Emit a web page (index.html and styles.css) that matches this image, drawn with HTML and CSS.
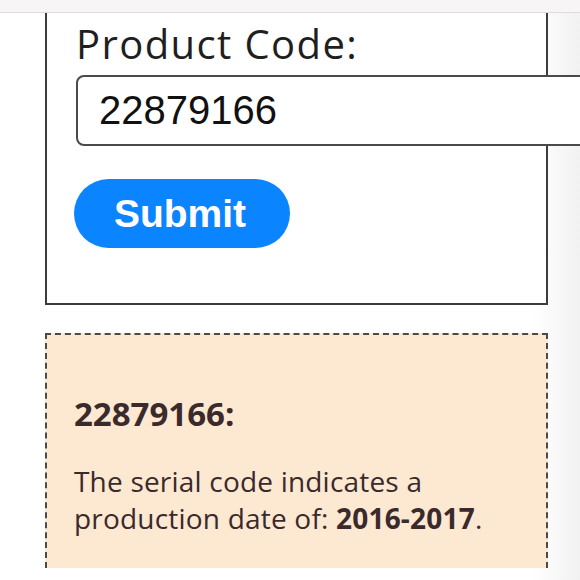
FILE: index.html
```html
<!DOCTYPE html>
<html lang="en">
<head>
<meta charset="utf-8">
<title>Product Code</title>
<link rel="stylesheet" href="styles.css">
</head>
<body>
<div class="topbar"></div>
<main class="page">
  <form class="form-card">
    <label class="label" for="code">Product Code:</label>
    <input class="code-input" id="code" type="text" value="22879166">
    <button class="submit" type="button">Submit</button>
  </form>
  <section class="result">
    <h2 class="result-title">22879166:</h2>
    <p class="result-text">The serial code indicates a production date of: <strong>2016-2017</strong>.</p>
  </section>
</main>
</body>
</html>
```
FILE: styles.css
```css
html, body {
  margin: 0;
  padding: 0;
  height: 580px;
  overflow: hidden;
  background: linear-gradient(90deg, #ffffff 0%, #ffffff 92%, #f1f1f1 100%);
}
body {
  font-family: "Open Sans", "Liberation Sans", sans-serif;
  color: #222;
}
.topbar {
  height: 12px;
  background: #f7f5f6;
  border-bottom: 1px solid #dedcdd;
}
.page {
  padding-left: 45px;
  width: 503px;
}
.form-card {
  box-sizing: border-box;
  width: 503px;
  height: 292px;
  border: 2px solid #3c3c3c;
  border-top: 0;
  background: #fff;
  padding: 4px 0 0 29px;
  display: flex;
  flex-direction: column;
  align-items: flex-start;
}
.label {
  font-size: 40px;
  line-height: 54px;
  letter-spacing: 1.4px;
  color: #1f1f1f;
}
.code-input {
  box-sizing: border-box;
  margin-top: 4px;
  width: 540px;
  height: 71px;
  border: 2px solid #4a4a4a;
  border-radius: 8px;
  padding: 0 0 0 21px;
  font-family: "Liberation Sans", Arial, sans-serif;
  font-size: 40px;
  color: #111;
  background: #fff;
  outline: none;
}
.submit {
  margin-top: 33px;
  margin-left: -2px;
  width: 216px;
  height: 69px;
  border: 0;
  border-radius: 35px;
  background: #0a84ff;
  color: #fff;
  font-family: "Liberation Sans", Arial, sans-serif;
  font-weight: bold;
  font-size: 39px;
  padding: 0 4px 0 0;
}
.result {
  box-sizing: border-box;
  margin-top: 28px;
  width: 503px;
  height: 235px;
  border: 2px dashed #4a4a4a;
  border-bottom: 0;
  background: #fde8d2;
  padding: 57px 0 0 27px;
  color: #3a2a2c;
}
.result-title {
  margin: 0;
  font-size: 33px;
  line-height: 44px;
  font-weight: 700;
}
.result-text {
  margin: 27px 0 0;
  font-size: 28px;
  line-height: 37px;
  letter-spacing: 0.2px;
}
.result-text strong {
  font-weight: 700;
}
```
